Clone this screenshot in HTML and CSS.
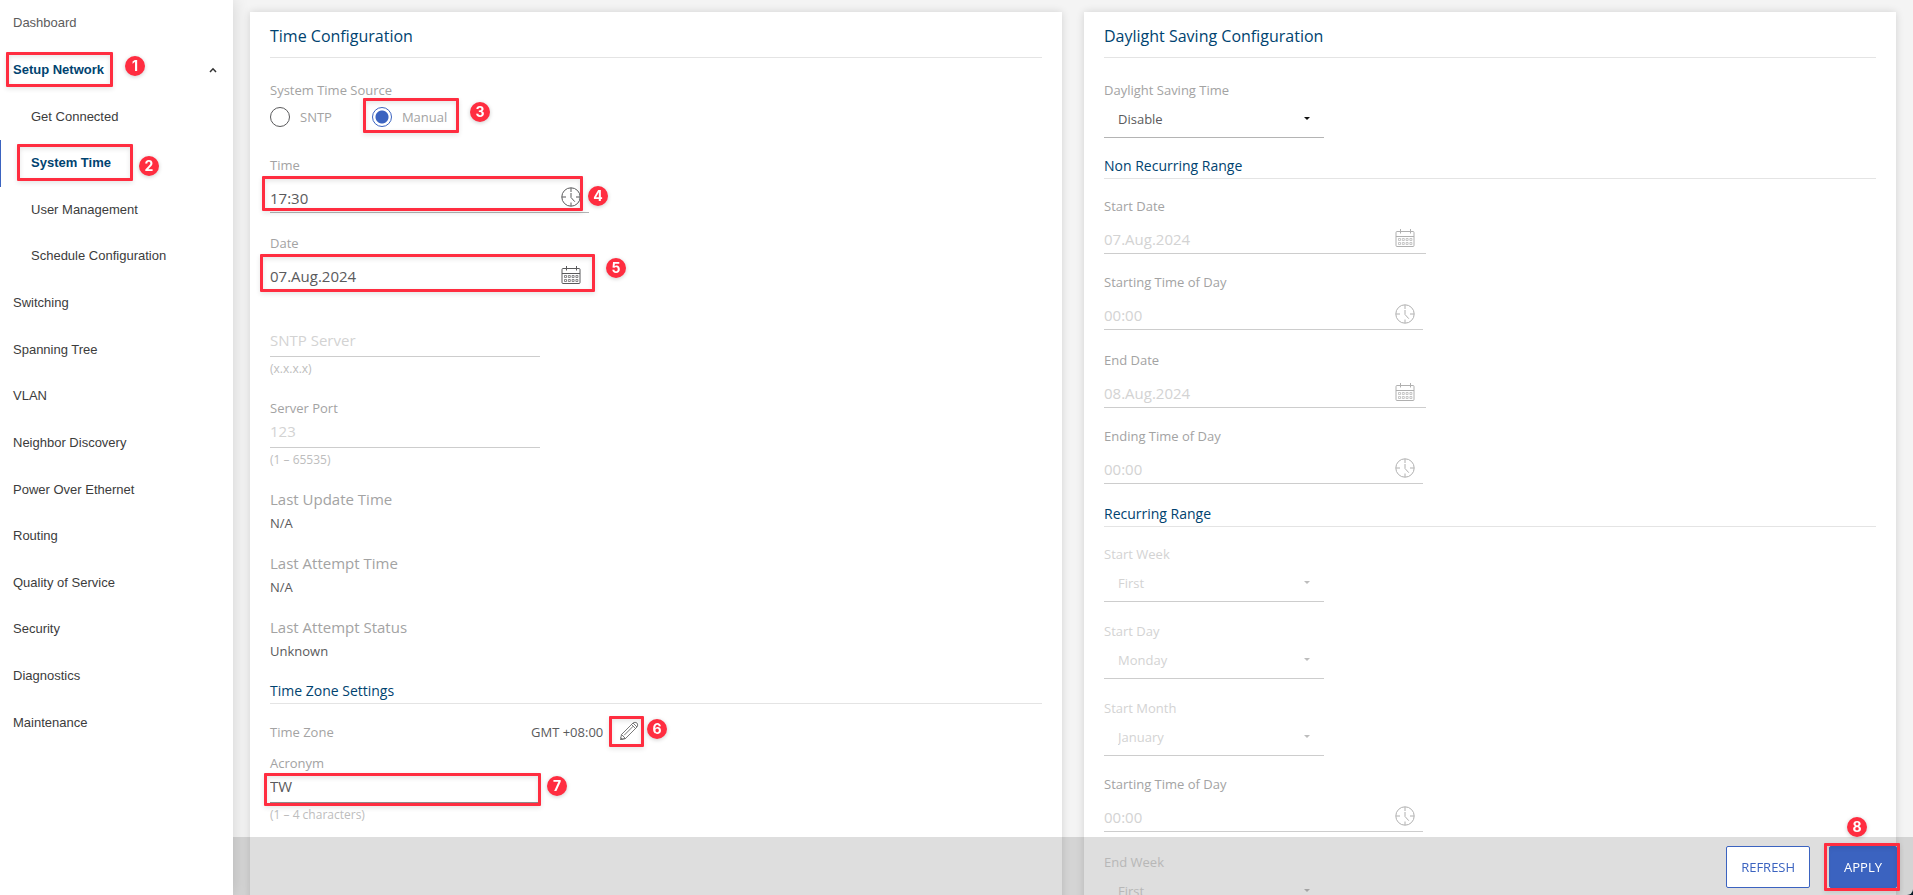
FILE: index.html
```html
<!DOCTYPE html>
<html lang="en">
<head>
<meta charset="utf-8">
<title>System Time</title>
<link rel="stylesheet" href="styles.css">
</head>
<body>
<svg class="sprite" aria-hidden="true">
  <symbol id="clock" viewBox="0 0 20 20">
    <circle cx="10" cy="10" r="9.2"/>
    <path d="M10 1v4M10 15.500v3.500M1 10h4M15 10h4M10 6v4.500l3.800 4.200"/>
  </symbol>
  <symbol id="calendar" viewBox="0 0 20 20">
    <rect x="1" y="3.500" width="18" height="15" rx="1"/>
    <path d="M1 8.500h18M5.500 1v4.500M15.500 1v4.500"/>
    <path stroke-width=".7" d="M3.500 10.500h2v2h-2zM7.300 10.500h2v2h-2zM11.100 10.500h2v2h-2zM14.900 10.500h2v2h-2zM3.500 14.500h2v2h-2zM7.300 14.500h2v2h-2zM11.100 14.500h2v2h-2zM14.900 14.500h2v2h-2z"/>
  </symbol>
</svg>
<div class="app">
  <nav class="sidebar" aria-label="Main">
    <a class="nav-link muted" href="#">Dashboard</a>
    <a class="nav-link open" href="#">Setup Network
      <svg class="chevron" viewBox="0 0 8 6" aria-hidden="true"><path d="M1 5l3-3.200L7 5"/></svg>
    </a>
    <a class="nav-link sub" href="#">Get Connected</a>
    <a class="nav-link sub current" href="#" aria-current="page">System Time</a>
    <a class="nav-link sub" href="#">User Management</a>
    <a class="nav-link sub" href="#">Schedule Configuration</a>
    <a class="nav-link" href="#">Switching</a>
    <a class="nav-link" href="#">Spanning Tree</a>
    <a class="nav-link" href="#">VLAN</a>
    <a class="nav-link" href="#">Neighbor Discovery</a>
    <a class="nav-link" href="#">Power Over Ethernet</a>
    <a class="nav-link" href="#">Routing</a>
    <a class="nav-link" href="#">Quality of Service</a>
    <a class="nav-link" href="#">Security</a>
    <a class="nav-link" href="#">Diagnostics</a>
    <a class="nav-link" href="#">Maintenance</a>
  </nav>

  <main class="content">
    <section class="card">
      <h2 class="card-title">Time Configuration</h2>
      <fieldset class="source">
        <legend class="label">System Time Source</legend>
        <div class="radios">
          <label class="radio"><input type="radio" name="source">SNTP</label>
          <label class="radio"><input type="radio" name="source" checked>Manual</label>
        </div>
      </fieldset>
      <div class="field time">
        <label class="label" for="time">Time</label>
        <div class="picker"><input id="time" type="text" value="17:30"><svg class="icon"><use href="#clock"/></svg></div>
      </div>
      <div class="field date">
        <label class="label" for="date">Date</label>
        <div class="picker"><input id="date" type="text" value="07.Aug.2024"><svg class="icon"><use href="#calendar"/></svg></div>
      </div>
      <div class="text-field first disabled">
        <input type="text" aria-label="SNTP Server" placeholder="SNTP Server" disabled>
        <p class="hint">(x.x.x.x)</p>
      </div>
      <div class="text-field disabled">
        <label class="label" for="port">Server Port</label>
        <input id="port" type="text" value="123" disabled>
        <p class="hint">(1 – 65535)</p>
      </div>
      <dl class="stats">
        <div class="stat"><dt>Last Update Time</dt><dd>N/A</dd></div>
        <div class="stat"><dt>Last Attempt Time</dt><dd>N/A</dd></div>
        <div class="stat"><dt>Last Attempt Status</dt><dd>Unknown</dd></div>
      </dl>
      <h3 class="section-title">Time Zone Settings</h3>
      <div class="zone">
        <span class="label">Time Zone</span>
        <span class="zone-value">GMT +08:00</span>
        <button class="edit" type="button" aria-label="Edit time zone">
          <svg viewBox="0 0 20 20"><path d="M1.500 18.500L2.500 13.500L14 2Q16 .5 18 2Q19.500 4 18 6L6.500 17.500ZM2.500 13.500L6.500 17.500M12.500 3.500L16.500 7.500M14.200 5.200L5.200 14.200M14 2l4 4M1.500 16.500l2 2"/><path d="M1.500 18.500L6.500 17.500"/></svg>
        </button>
      </div>
      <div class="text-field">
        <label class="label" for="acronym">Acronym</label>
        <input id="acronym" type="text" value="TW">
        <p class="hint">(1 – 4 characters)</p>
      </div>
    </section>

    <section class="card">
      <h2 class="card-title">Daylight Saving Configuration</h2>
      <div class="field">
        <label class="label" for="dst">Daylight Saving Time</label>
        <div class="select"><select id="dst"><option>Disable</option></select></div>
      </div>
      <h3 class="section-title">Non Recurring Range</h3>
      <div class="field date disabled">
        <label class="label" for="sd">Start Date</label>
        <div class="picker"><input id="sd" type="text" value="07.Aug.2024" disabled><svg class="icon"><use href="#calendar"/></svg></div>
      </div>
      <div class="field time disabled">
        <label class="label" for="st">Starting Time of Day</label>
        <div class="picker"><input id="st" type="text" value="00:00" disabled><svg class="icon"><use href="#clock"/></svg></div>
      </div>
      <div class="field date disabled">
        <label class="label" for="ed">End Date</label>
        <div class="picker"><input id="ed" type="text" value="08.Aug.2024" disabled><svg class="icon"><use href="#calendar"/></svg></div>
      </div>
      <div class="field time disabled">
        <label class="label" for="et">Ending Time of Day</label>
        <div class="picker"><input id="et" type="text" value="00:00" disabled><svg class="icon"><use href="#clock"/></svg></div>
      </div>
      <h3 class="section-title">Recurring Range</h3>
      <div class="field choice disabled">
        <label class="label faint" for="sw">Start Week</label>
        <div class="select"><select id="sw" disabled><option>First</option></select></div>
      </div>
      <div class="field choice disabled">
        <label class="label faint" for="sday">Start Day</label>
        <div class="select"><select id="sday" disabled><option>Monday</option></select></div>
      </div>
      <div class="field disabled">
        <label class="label faint" for="sm">Start Month</label>
        <div class="select"><select id="sm" disabled><option>January</option></select></div>
      </div>
      <div class="field time disabled">
        <label class="label" for="rst">Starting Time of Day</label>
        <div class="picker"><input id="rst" type="text" value="00:00" disabled><svg class="icon"><use href="#clock"/></svg></div>
      </div>
      <div class="field disabled">
        <label class="label faint" for="ew">End Week</label>
        <div class="select"><select id="ew" disabled><option>First</option></select></div>
      </div>
    </section>
  </main>
</div>

<footer class="actions">
  <button class="btn" type="button">REFRESH</button>
  <button class="btn primary" type="button">APPLY</button>
</footer>

<div class="marks">
  <div class="box b1"></div><span class="badge n1">1</span>
  <div class="box b2"></div><span class="badge n2">2</span>
  <div class="box b3"></div><span class="badge n3">3</span>
  <div class="box b4"></div><span class="badge n4">4</span>
  <div class="box b5"></div><span class="badge n5">5</span>
  <div class="box b6"></div><span class="badge n6">6</span>
  <div class="box b7"></div><span class="badge n7">7</span>
  <div class="box b8"></div><span class="badge n8">8</span>
</div>
</body>
</html>
```
FILE: styles.css
```css
:root {
  --blue: #3b63c0;
  --navy: #004370;
  --red: #ff2d40;
  --text: #5a5a5c;
  --label: #a3a3a3;
  --faint: #d3d3d3;
}

* { box-sizing: border-box; }

html { background: #071a26; }

body {
  margin: 0;
  height: 100vh;
  overflow: hidden;
  position: relative;
  background: #f4f4f4;
  border-bottom-right-radius: 6px;
  color: var(--text);
  font: 13px/20px "Open Sans", "Noto Sans", sans-serif;
}

.sprite { display: none; }

.app { display: flex; height: 100%; }

/* Navigation */
.sidebar {
  flex: 0 0 233px;
  background: #fff;
  box-shadow: 0 0 16px rgba(0, 0, 0, .14);
  display: grid;
  grid-auto-rows: 1fr;
  align-self: stretch;
  padding-bottom: 149px;
  z-index: 1;
}
.nav-link {
  display: flex;
  align-items: center;
  justify-content: space-between;
  padding: 0 16px 0 13px;
  color: #3c3c3c;
  font: 13px/20px "Liberation Sans", Arial, sans-serif;
  text-decoration: none;
}
.nav-link.muted { color: #5c5c5c; }
.nav-link.open, .nav-link.current { color: var(--navy); font-weight: bold; }
.nav-link.sub { padding-left: 31px; }
.nav-link.current { padding-left: 30px; border-left: 1px solid var(--blue); }
.chevron { width: 8px; height: 6px; fill: none; stroke: #333; stroke-width: 1.5; }

/* Cards */
.content {
  flex: 1;
  min-width: 0;
  display: grid;
  grid-template-columns: 1fr 1fr;
  gap: 22px;
  padding: 12px 17px 0;
}
.card {
  background: #fff;
  padding: 0 20px 80px;
  box-shadow: 0 0 8px rgba(0, 0, 0, .14);
}
.card-title {
  margin: 0 0 22px;
  padding: 12px 0 9px;
  border-bottom: 1px solid #e4e4e4;
  color: var(--navy);
  font-size: 16px;
  font-weight: 400;
  line-height: 24px;
}
.section-title {
  margin: 0 0 17px;
  padding-bottom: 2px;
  border-bottom: 1px solid #e4e4e4;
  color: var(--navy);
  font-size: 14px;
  font-weight: 400;
  line-height: 20px;
}
.label { display: block; padding: 0; color: var(--label); }
.label.faint { color: var(--faint); }

input, select, button { font-family: inherit; color: inherit; }
input[type="text"] {
  display: block;
  min-width: 0;
  border: 0;
  padding: 0;
  background: transparent;
  font-size: 15px;
  line-height: 22px;
  color: var(--text);
}
.disabled input[type="text"] { color: var(--faint); opacity: 1; }
input::placeholder { color: var(--faint); opacity: 1; }

/* Radio group */
.source { margin: 0 0 28px; padding: 0; border: 0; }
.radios { display: flex; gap: 40px; padding-top: 7px; }
.radio { display: flex; align-items: center; gap: 10px; color: var(--label); }
.radio input {
  appearance: none;
  width: 20px;
  height: 20px;
  margin: 0;
  border: 1px solid #5a5a5c;
  border-radius: 50%;
}
.radio input:checked {
  border-color: var(--blue);
  background: radial-gradient(circle, var(--blue) 6px, transparent 7px);
}

/* Fields */
.field { margin-bottom: 18px; }
.field.time { margin-bottom: 20px; }
.field.choice { margin-bottom: 19px; }
.picker {
  display: flex;
  align-items: center;
  width: 322px;
  height: 30px;
  margin-top: 8px;
  border-bottom: 1px solid #b4b4b4;
}
.time .picker { width: 319px; }
.picker input { flex: 0 0 291px; height: 29px; }
.disabled .picker, .disabled .select, .disabled > input[type="text"] { border-color: #cdcdcd; }
.icon {
  width: 20px;
  height: 20px;
  margin-bottom: 2px;
  fill: none;
  stroke: #5a5a5c;
  stroke-width: 1;
}
.disabled .icon { stroke: #b0b0b0; }

.select {
  position: relative;
  width: 220px;
  height: 38px;
  border-bottom: 1px solid #b4b4b4;
}
.select::after {
  content: "";
  position: absolute;
  right: 14px;
  top: 17px;
  border: 3px solid transparent;
  border-top-color: #111;
  border-bottom: 0;
}
.disabled .select::after { border-top-color: #bdbdbd; }
.select select {
  appearance: none;
  width: 100%;
  height: 37px;
  padding: 0 14px;
  border: 0;
  background: transparent;
  font-size: 13px;
}
.disabled .select select { color: var(--faint); opacity: 1; }

.text-field { width: 270px; margin-bottom: 21px; }
.text-field.first { margin: 38px 0 21px; }
.text-field > input[type="text"] {
  width: 100%;
  height: 28px;
  padding-bottom: 5px;
  border-bottom: 1px solid #8f8f8f;
}
.text-field.disabled > input[type="text"] { border-bottom-color: #cdcdcd; }
.text-field .label { margin-bottom: 2px; }
.hint { margin: 4px 0 0; color: #bdbdbd; font-size: 12px; line-height: 16px; }

.stats { display: grid; gap: 20px; margin: 0 0 20px; }
.stat dt { color: var(--label); font-size: 15px; }
.stat dd { margin: 4px 0 0; }

.zone { display: flex; align-items: center; height: 22px; margin-bottom: 10px; }
.zone .label { width: 261px; }
.edit { margin-left: 16px; padding: 0 0 2px; border: 0; background: none; line-height: 0; }
.edit svg { width: 20px; height: 20px; fill: none; stroke: #6b6b6b; stroke-width: .9; }

/* Action bar */
.actions {
  position: fixed;
  left: 233px;
  right: 0;
  bottom: 0;
  z-index: 2;
  display: flex;
  justify-content: flex-end;
  gap: 19px;
  padding: 9px 16px 7px;
  background: rgba(0, 0, 0, .13);
  border-bottom-right-radius: 6px;
}
.btn {
  height: 42px;
  padding: 0 14px;
  border: 1px solid var(--blue);
  border-radius: 2px;
  background: #fff;
  color: var(--blue);
  font-size: 13px;
}
.btn.primary { background: var(--blue); color: #fff; }

/* Numbered call-outs */
.marks { position: absolute; inset: 0; z-index: 3; pointer-events: none; }
.box {
  position: absolute;
  border: 3px solid var(--red);
  border-radius: 1px;
  box-shadow: 0 2px 5px rgba(0, 0, 0, .1), inset 0 2px 5px rgba(0, 0, 0, .1);
}
.badge {
  position: absolute;
  width: 20px;
  height: 20px;
  border-radius: 50%;
  background: var(--red);
  box-shadow: 0 1px 4px rgba(0, 0, 0, .2);
  color: #fff;
  font: bold 14px/20px Inter, sans-serif;
  text-align: center;
}
.b1 { left: 6px; top: 52px; width: 107px; height: 35px; }
.b2 { left: 17px; top: 144px; width: 116px; height: 37px; }
.b3 { left: 363px; top: 98px; width: 96px; height: 35px; }
.b4 { left: 262px; top: 176px; width: 321px; height: 35px; }
.b5 { left: 260px; top: 254px; width: 335px; height: 38px; }
.b6 { left: 609px; top: 716px; width: 35px; height: 31px; }
.b7 { left: 264px; top: 773px; width: 277px; height: 33px; }
.b8 { right: 13px; bottom: 4px; width: 76px; height: 48px; }
.n1 { left: 125px; top: 56px; }
.n2 { left: 139px; top: 156px; }
.n3 { left: 470px; top: 102px; }
.n4 { left: 588px; top: 186px; }
.n5 { left: 606px; top: 258px; }
.n6 { left: 647px; top: 719px; }
.n7 { left: 547px; top: 776px; }
.n8 { right: 46px; bottom: 58px; }
```
